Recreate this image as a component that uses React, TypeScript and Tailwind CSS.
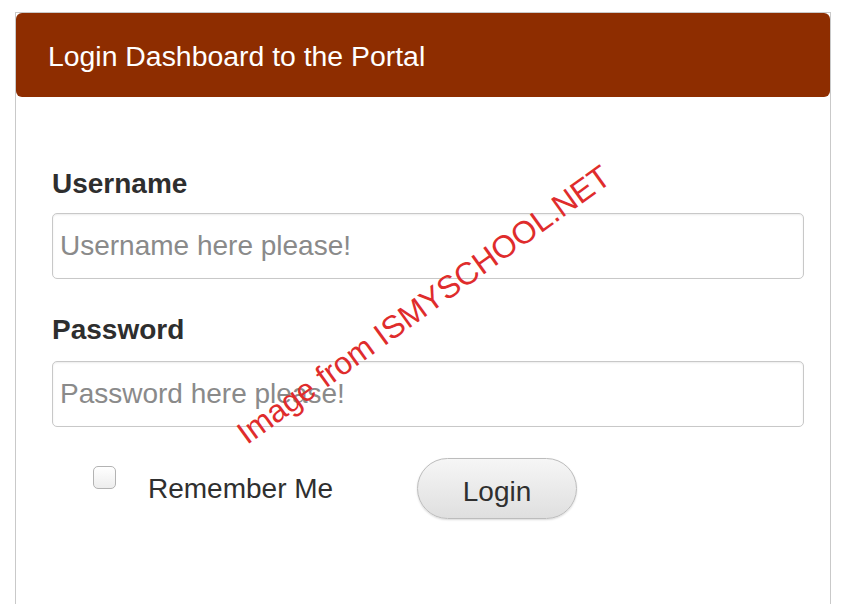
export default function App() {
  return (
    <div className="relative h-[604px] w-[852px] overflow-hidden bg-white font-['Liberation_Sans',Arial,sans-serif]">
      <div className="ml-[15px] mt-[12px] min-h-[640px] w-[816px] border border-[#c9c9c9]">
        <div className="flex h-[84px] items-center rounded-[6px] bg-[#8e2d00] pl-[32px] pt-[3px] text-[28.4px] text-white">
          Login Dashboard to the Portal
        </div>

        <div className="pl-[36px]">
          <label className="mt-[71px] block text-[28px] font-bold leading-[32px] text-[#2e2e2e]">
            Username
          </label>
          <input
            type="text"
            placeholder="Username here please!"
            className="mt-[13px] block h-[66px] w-[752px] rounded-[5px] border border-[#c8c8c8] px-[7px] text-[28px] text-[#333] shadow-[inset_0_1px_2px_rgba(0,0,0,0.08)] outline-none placeholder:text-[#8a8a8a]"
          />

          <label className="mt-[35px] block text-[28px] font-bold leading-[32px] text-[#2e2e2e]">
            Password
          </label>
          <input
            type="password"
            placeholder="Password here please!"
            className="mt-[15px] block h-[66px] w-[752px] rounded-[5px] border border-[#c8c8c8] px-[7px] text-[28px] text-[#333] shadow-[inset_0_1px_2px_rgba(0,0,0,0.08)] outline-none placeholder:text-[#8a8a8a]"
          />

          <div className="mt-[31px] flex items-center pl-[41px]">
            <input
              type="checkbox"
              className="mt-[8px] h-[23px] w-[23px] self-start appearance-none rounded-[5px] border border-[#b3b3b3] bg-linear-to-b from-white to-[#ededed]"
            />
            <span className="ml-[32px] w-[269px] text-[28px] text-[#2f2f2f]">Remember Me</span>
            <button className="h-[61px] w-[160px] rounded-full border border-[#bcbcbc] bg-linear-to-b from-[#f6f6f6] to-[#dfdfdf] pt-[6px] text-[28px] text-[#2f2f2f] shadow-[0_1px_2px_rgba(0,0,0,0.15)]">
              Login
            </button>
          </div>
        </div>
      </div>

      <div className="pointer-events-none absolute left-[424px] top-[305px] -translate-x-1/2 -translate-y-1/2 -rotate-[35.8deg] whitespace-nowrap text-[31.6px] text-[#df2c2c]">
        Image from ISMYSCHOOL.NET
      </div>
    </div>
  )
}
